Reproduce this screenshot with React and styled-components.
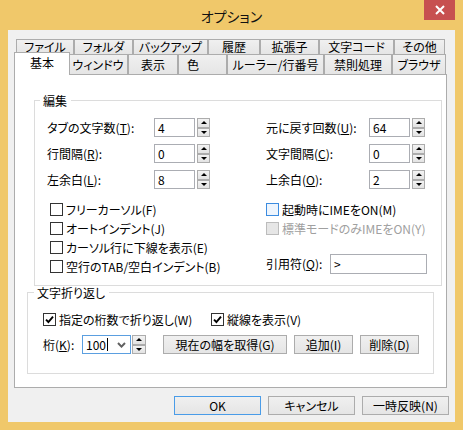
import React from 'react'
import styled, { createGlobalStyle } from 'styled-components'

const GlobalStyle = createGlobalStyle`
    html, body {
        margin: 0;
        padding: 0;
        background: #fff;
    }
    body {
        font-family: "Noto Sans CJK JP", "Noto Sans", sans-serif;
        font-size: 12px;
        color: #000;
        font-feature-settings: "palt";
    }
`

const Window = styled.div`
    width: 463px;
    height: 430px;
    box-sizing: border-box;
    padding: 0 8px 8px;
    background: #f0c86a;
    display: flex;
    flex-direction: column;
`
const TitleBar = styled.div`
    height: 30px;
    flex: none;
    display: grid;
    grid-template-columns: 1fr auto 1fr;
`
const Title = styled.div`
    grid-column: 2;
    align-self: center;
    padding-top: 2px;
    font-size: 14px;
    line-height: 16px;
    color: #111;
`
const CloseButton = styled.div`
    grid-column: 3;
    justify-self: end;
    width: 31px;
    height: 20px;
    background: #c75050;
    display: flex;
    align-items: center;
    justify-content: center;
`
const Client = styled.div`
    flex: 1;
    background: #f0f0f0;
    padding: 9px 0 0 6px;
    display: flex;
    flex-direction: column;
`
const TabControl = styled.div`
    width: 433px;
    display: flex;
    flex-direction: column;
`
const TabRow = styled.div`
    display: flex;
    padding-left: 2px;
    height: ${props => props.$h}px;
`
const Tab = styled.div`
    box-sizing: border-box;
    width: ${props => props.$w}px;
    height: 100%;
    flex: none;
    border: 1px solid #acacac;
    border-bottom: none;
    background: linear-gradient(#f0f0f0, #e5e5e5);
    padding: ${props => props.$pt}px 0 0 ${props => props.$left ? 8 : 0}px;
    text-align: ${props => props.$left ? 'left' : 'center'};
    line-height: ${props => props.$lh || 14}px;
    white-space: nowrap;
    overflow: hidden;
`
const ActiveTab = styled(Tab)`
    position: relative;
    z-index: 1;
    align-self: flex-start;
    width: ${props => props.$w + 4}px;
    height: calc(100% + 3px);
    margin: -2px -2px 0;
    background: #fff;
`
const Panel = styled.div`
    box-sizing: border-box;
    height: 314px;
    border: 1px solid #acacac;
    background: #fff;
    display: flex;
    flex-direction: column;
`
const GroupBox = styled.div`
    box-sizing: border-box;
    width: ${props => props.$w}px;
    height: ${props => props.$h}px;
    margin: ${props => props.$mt}px 0 0 ${props => props.$ml}px;
    border: 1px solid #dcdcdc;
    padding-top: 17px;
`
const GroupTitle = styled.div`
    width: fit-content;
    height: 14px;
    margin: -24px 0 10px ${props => props.$ml}px;
    padding: 0 4px 0 3px;
    background: #fff;
    line-height: 14px;
`
const FieldGrid = styled.div`
    display: grid;
    grid-template-columns: 107px 112px 103px auto;
    grid-auto-rows: 19px;
    row-gap: 7px;
    align-items: center;
    padding-left: 12px;
`
const Label = styled.span`
    white-space: nowrap;
    line-height: 14px;
    width: ${props => props.$w ? `${props.$w}px` : 'auto'};
    flex: none;
`
const SpinField = styled.div`
    display: flex;
    gap: ${props => props.$gap ?? 2}px;
`
const TextBox = styled.div`
    box-sizing: border-box;
    width: ${props => props.$w}px;
    height: ${props => props.$h || 19}px;
    border: 1px solid #abadb3;
    background: #fff;
    padding-left: 3px;
    line-height: ${props => (props.$h || 19) - 2}px;
    white-space: nowrap;
`
const Spin = styled.div`
    width: ${props => props.$w || 13}px;
    height: 19px;
    display: flex;
    flex-direction: column;
`
const SpinHalf = styled.div`
    flex: 1;
    box-sizing: border-box;
    border: 1px solid #acacac;
    background: linear-gradient(#f3f3f3, #e3e3e3);
    display: flex;
    align-items: center;
    justify-content: center;
`
const Arrow = styled.span`
    width: 0;
    height: 0;
    border-left: 3px solid transparent;
    border-right: 3px solid transparent;
    ${props => props.$down ? 'border-top: 3px solid #000;' : 'border-bottom: 3px solid #000;'}
`
const CheckArea = styled.div`
    display: grid;
    grid-template-columns: 216px auto;
    margin: 11px 0 0 15px;
`
const CheckColumn = styled.div`
    display: flex;
    flex-direction: column;
`
const CheckRow = styled.div`
    height: 19px;
    display: flex;
    align-items: center;
    gap: 3px;
    width: ${props => props.$w ? `${props.$w}px` : 'auto'};
    flex: none;
    white-space: nowrap;
    line-height: 14px;
    color: ${props => props.$disabled ? '#a0a0a0' : '#000'};
`
const Box = styled.span`
    box-sizing: border-box;
    width: 13px;
    height: 13px;
    flex: none;
    display: flex;
    align-items: center;
    justify-content: center;
    border: 1px solid ${props => props.$disabled ? '#bcbcbc' : props.$hot ? '#3c8ce0' : '#333'};
    background: ${props => props.$disabled ? '#e6e6e6' : props.$hot ? '#eef5fd' : '#fff'};
`
const QuoteRow = styled.div`
    display: flex;
    align-items: center;
    margin-top: 16px;
`
const WrapRow = styled.div`
    display: flex;
    align-items: center;
    padding-left: 15px;
    margin-top: ${props => props.$mt || 0}px;
`
const Combo = styled.div`
    box-sizing: border-box;
    width: 49px;
    height: 19px;
    border: 1px solid #5b9fe0;
    background: #fff;
    display: flex;
    align-items: center;
    padding: 0 4px 0 3px;
`
const Caret = styled.span`
    width: 1px;
    height: 13px;
    background: #000;
    margin-left: 1px;
`
const ComboArrow = styled.svg`
    margin-left: auto;
`
const ButtonGroup = styled.div`
    display: flex;
    gap: 7px;
    margin-left: 17px;
`
const Button = styled.div`
    box-sizing: border-box;
    width: ${props => props.$w}px;
    height: 19px;
    border: 1px solid ${props => props.$default ? '#4a9ce8' : '#acacac'};
    background: linear-gradient(#f0f0f0, #e5e5e5);
    text-align: center;
    line-height: 17px;
    white-space: nowrap;
`
const ButtonBar = styled.div`
    display: flex;
    justify-content: flex-end;
    gap: 7px;
    margin-top: 8px;
    padding-right: 6px;
`

const topTabs = [
    ['ファイル', 58], ['フォルダ', 59], ['バックアップ', 75], ['履歴', 52],
    ['拡張子', 59], ['文字コード', 75], ['その他', 51],
]
const bottomTabs = [
    ['基本', 52], ['ウィンドウ', 60], ['表示', 50], ['色', 49],
    ['ルーラー/行番号', 97], ['禁則処理', 68], ['ブラウザ', 54],
]

function SpinButtons({ w }) {
    return (
        <Spin $w={w}>
            <SpinHalf><Arrow /></SpinHalf>
            <SpinHalf><Arrow $down /></SpinHalf>
        </Spin>
    )
}

function NumberField({ value }) {
    return (
        <SpinField>
            <TextBox $w={41}>{value}</TextBox>
            <SpinButtons />
        </SpinField>
    )
}

function CheckMark() {
    return (
        <svg width="9" height="9" viewBox="0 0 9 9">
            <path d="M1 4.6 L3.4 7 L8 1.6" fill="none" stroke="#000" strokeWidth="1.9" />
        </svg>
    )
}

function CheckBox({ children, checked, hot, disabled, w }) {
    return (
        <CheckRow $disabled={disabled} $w={w}>
            <Box $hot={hot} $disabled={disabled}>{checked && <CheckMark />}</Box>
            <span>{children}</span>
        </CheckRow>
    )
}

export default function App() {
    return (
        <>
            <GlobalStyle />
            <Window>
                <TitleBar>
                    <Title>オプション</Title>
                    <CloseButton>
                        <svg width="10" height="10" viewBox="0 0 10 10">
                            <path d="M1 1 L9 9 M9 1 L1 9" stroke="#fff" strokeWidth="2" />
                        </svg>
                    </CloseButton>
                </TitleBar>
                <Client>
                    <TabControl>
                        <TabRow $h={15}>
                            {topTabs.map(([name, w]) =>
                                <Tab key={name} $w={w} $pt={0} $lh={13}>{name}</Tab>
                            )}
                        </TabRow>
                        <TabRow $h={20}>
                            {bottomTabs.map(([name, w], index) =>
                                index === 0
                                    ? <ActiveTab key={name} $w={w} $pt={3}>{name}</ActiveTab>
                                    : <Tab key={name} $w={w} $pt={3} $left={name === '色'}>{name}</Tab>
                            )}
                        </TabRow>
                        <Panel>
                            <GroupBox $w={408} $h={186} $mt={25} $ml={19}>
                                <GroupTitle $ml={5}>編集</GroupTitle>
                                <FieldGrid>
                                    <Label>タブの文字数(<u>T</u>):</Label>
                                    <NumberField value="4" />
                                    <Label>元に戻す回数(<u>U</u>):</Label>
                                    <NumberField value="64" />
                                    <Label>行間隔(<u>R</u>):</Label>
                                    <NumberField value="0" />
                                    <Label>文字間隔(<u>C</u>):</Label>
                                    <NumberField value="0" />
                                    <Label>左余白(<u>L</u>):</Label>
                                    <NumberField value="8" />
                                    <Label>上余白(<u>O</u>):</Label>
                                    <NumberField value="2" />
                                </FieldGrid>
                                <CheckArea>
                                    <CheckColumn>
                                        <CheckBox>フリーカーソル(F)</CheckBox>
                                        <CheckBox>オートインデント(J)</CheckBox>
                                        <CheckBox>カーソル行に下線を表示(E)</CheckBox>
                                        <CheckBox>空行のTAB/空白インデント(B)</CheckBox>
                                    </CheckColumn>
                                    <CheckColumn>
                                        <CheckBox hot>起動時にIMEをON(M)</CheckBox>
                                        <CheckBox disabled>標準モードのみIMEをON(Y)</CheckBox>
                                        <QuoteRow>
                                            <Label $w={64}>引用符(<u>Q</u>):</Label>
                                            <TextBox $w={97} $h={20}>&gt;</TextBox>
                                        </QuoteRow>
                                    </CheckColumn>
                                </CheckArea>
                            </GroupBox>
                            <GroupBox $w={407} $h={82} $mt={6} $ml={12}>
                                <GroupTitle $ml={6}>文字折り返し</GroupTitle>
                                <WrapRow>
                                    <CheckBox checked w={168}>指定の桁数で折り返し(W)</CheckBox>
                                    <CheckBox checked>縦線を表示(V)</CheckBox>
                                </WrapRow>
                                <WrapRow $mt={6}>
                                    <Label $w={39}>桁(<u>K</u>):</Label>
                                    <SpinField $gap={1}>
                                        <Combo>
                                            <span>100</span>
                                            <Caret />
                                            <ComboArrow width="9" height="6" viewBox="0 0 9 6">
                                                <path d="M1 1 L4.5 4.6 L8 1" fill="none" stroke="#606060" strokeWidth="2" />
                                            </ComboArrow>
                                        </Combo>
                                        <SpinButtons w={14} />
                                    </SpinField>
                                    <ButtonGroup>
                                        <Button $w={124}>現在の幅を取得(G)</Button>
                                        <Button $w={59}>追加(I)</Button>
                                        <Button $w={59}>削除(D)</Button>
                                    </ButtonGroup>
                                </WrapRow>
                            </GroupBox>
                        </Panel>
                    </TabControl>
                    <ButtonBar>
                        <Button $w={87} $default>OK</Button>
                        <Button $w={87}>キャンセル</Button>
                        <Button $w={87}>一時反映(N)</Button>
                    </ButtonBar>
                </Client>
            </Window>
        </>
    )
}
